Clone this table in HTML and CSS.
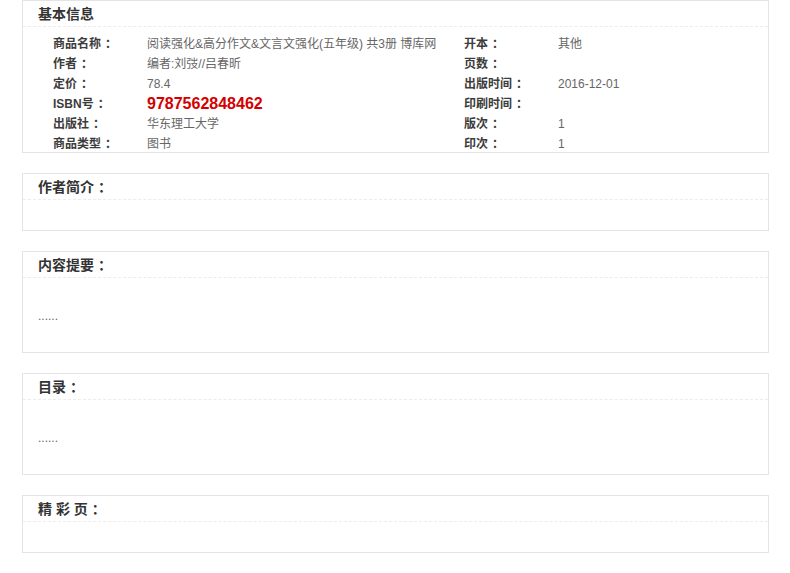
FILE: index.html
```html
<!DOCTYPE html>
<html lang="zh-CN">
<head>
<meta charset="utf-8">
<title>基本信息</title>
<link rel="stylesheet" href="styles.css">
</head>
<body>
<div class="page">
  <section class="box">
    <h2 class="box-head">基本信息</h2>
    <div class="info">
      <span class="lbl">商品名称<span class="c">：</span></span><span class="val">阅读强化&amp;高分作文&amp;文言文强化(五年级) 共3册 博库网</span>
      <span class="lbl">开本<span class="c">：</span></span><span class="val">其他</span>
      <span class="lbl">作者<span class="c">：</span></span><span class="val">编者:刘弢//吕春昕</span>
      <span class="lbl">页数<span class="c">：</span></span><span class="val"></span>
      <span class="lbl">定价<span class="c">：</span></span><span class="val">78.4</span>
      <span class="lbl">出版时间<span class="c">：</span></span><span class="val">2016-12-01</span>
      <span class="lbl">ISBN号<span class="c">：</span></span><span class="val isbn">9787562848462</span>
      <span class="lbl">印刷时间<span class="c">：</span></span><span class="val"></span>
      <span class="lbl">出版社<span class="c">：</span></span><span class="val">华东理工大学</span>
      <span class="lbl">版次<span class="c">：</span></span><span class="val">1</span>
      <span class="lbl">商品类型<span class="c">：</span></span><span class="val">图书</span>
      <span class="lbl">印次<span class="c">：</span></span><span class="val">1</span>
    </div>
  </section>

  <section class="box">
    <h2 class="box-head">作者简介<span class="c">：</span></h2>
    <div class="box-body"></div>
  </section>

  <section class="box">
    <h2 class="box-head">内容提要<span class="c">：</span></h2>
    <div class="box-body"><p class="text">......</p></div>
  </section>

  <section class="box">
    <h2 class="box-head">目录<span class="c">：</span></h2>
    <div class="box-body"><p class="text">......</p></div>
  </section>

  <section class="box">
    <h2 class="box-head">精 彩 页<span class="c">：</span></h2>
    <div class="box-body"></div>
  </section>
</div>
</body>
</html>
```

FILE: styles.css
```css
html, body {
  margin: 0;
  padding: 0;
  background: #ffffff;
}

body {
  font-family: "Liberation Sans", "Noto Sans CJK SC", sans-serif;
  font-size: 12px;
  color: #666666;
}

.page {
  display: flex;
  flex-direction: column;
  gap: 20px;
  width: 747px;
  margin-left: 22px;
}

.box {
  border: 1px solid #e4e4e4;
  box-sizing: border-box;
  background: #ffffff;
}

.box-head {
  margin: 0;
  height: 25px;
  line-height: 26px;
  padding-left: 15px;
  font-size: 14px;
  font-weight: bold;
  color: #333333;
  border-bottom: 1px dashed #ececec;
  overflow: hidden;
}

.c {
  padding-left: 4px;
}

.box-body {
  min-height: 30px;
}

.text {
  margin: 0;
  padding: 29px 15px 27px;
  line-height: 18px;
  color: #666666;
}

.info {
  display: grid;
  grid-template-columns: 94px 317px 94px 1fr;
  grid-auto-rows: 20px;
  padding: 7px 0 0 30px;
  margin-bottom: -2px;
  line-height: 20px;
}

.lbl {
  font-weight: bold;
  color: #3c3c3c;
  white-space: nowrap;
}

.val {
  color: #666666;
  white-space: nowrap;
}

.isbn {
  font-size: 16px;
  font-weight: bold;
  color: #d40000;
}
```
